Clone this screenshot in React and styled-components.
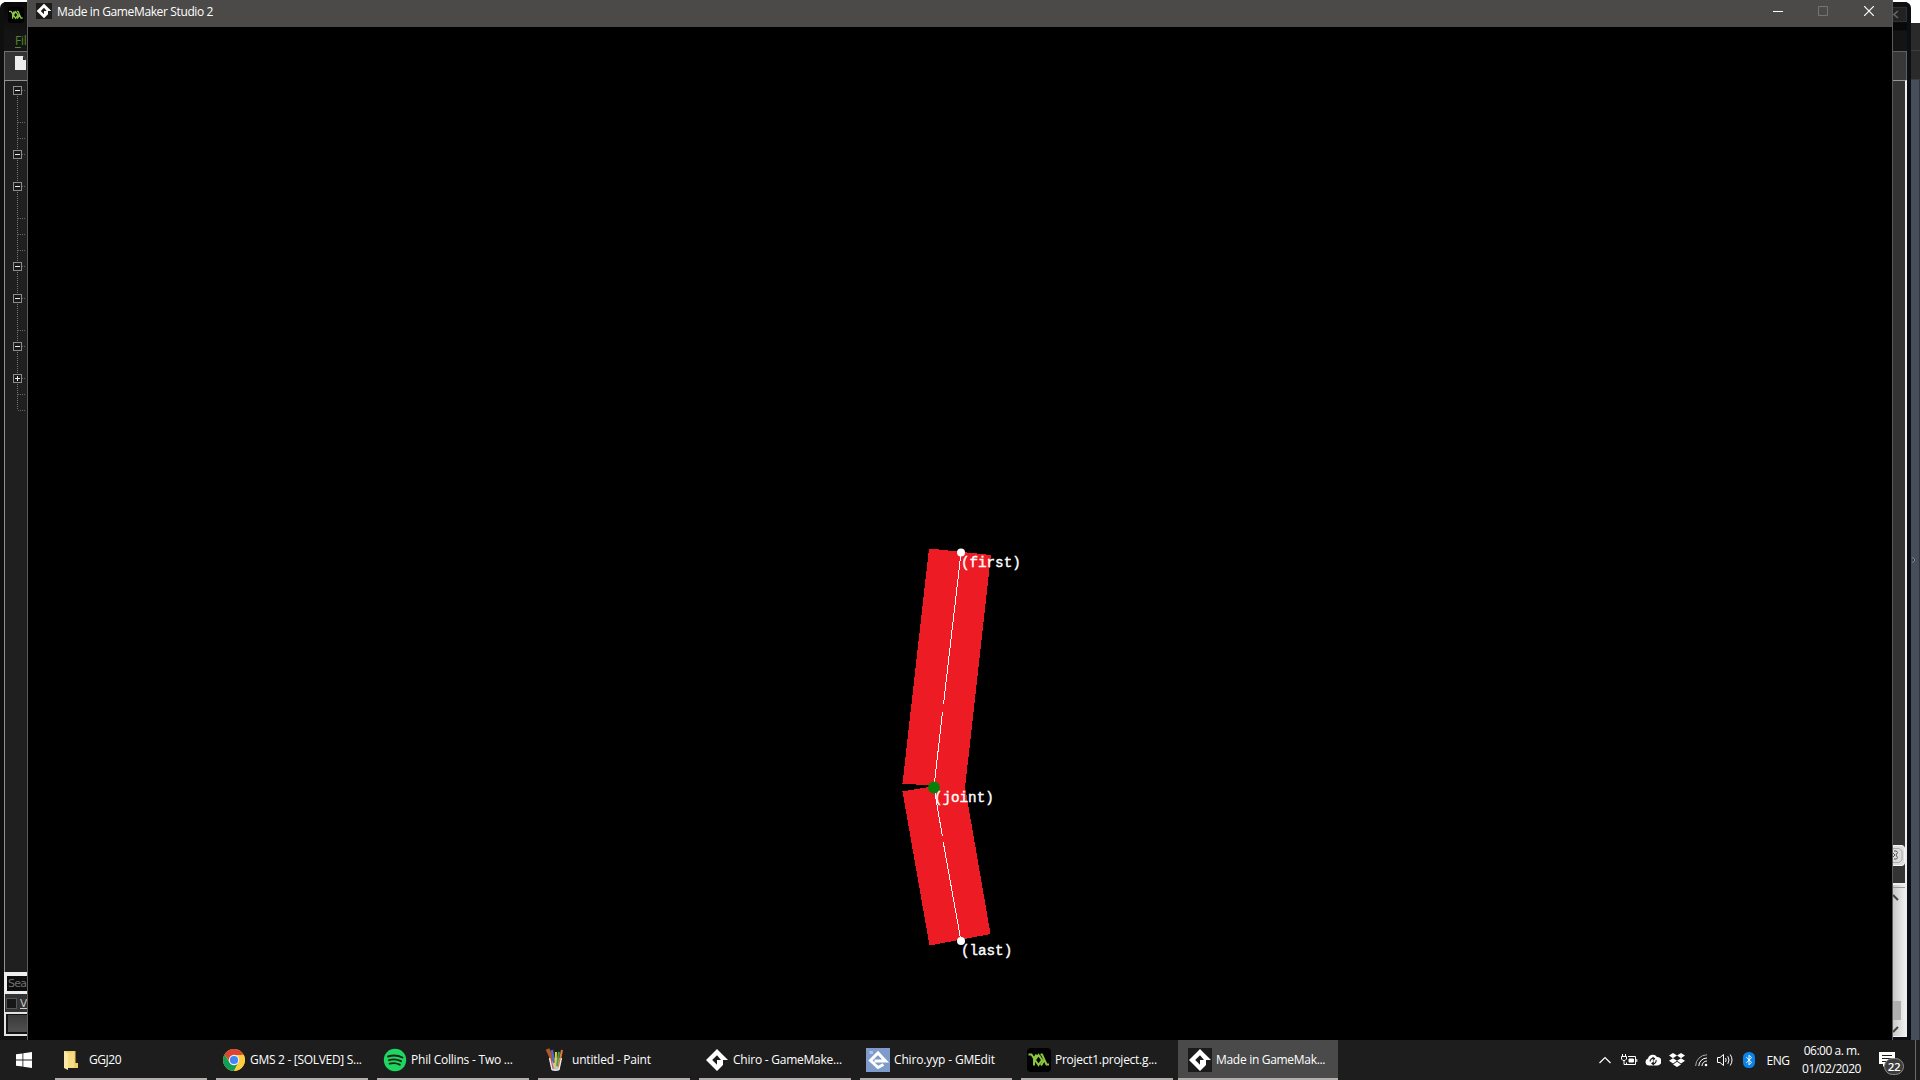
import React from "react";
import styled, { createGlobalStyle } from "styled-components";

const GlobalStyle = createGlobalStyle`
  * { box-sizing: border-box; }
  body {
    margin: 0;
    background: #000;
    overflow: hidden;
    font-family: "Open Sans", "Noto Sans", sans-serif;
    font-size: 12px;
    color: #fff;
  }
  svg { display: block; flex: none; }
`;

const Screen = styled.div`
  width: 1920px;
  height: 1080px;
  display: flex;
  flex-direction: column;
  overflow: hidden;
`;

const Desktop = styled.div`
  flex: 1;
  min-height: 0;
  display: flex;
  background: #fff;
`;

/* ---------- editor window, left edge ---------- */
const EditorLeft = styled.div`
  width: 27px;
  height: 1038px;
  margin-top: 2px;
  padding-left: 4px;
  display: flex;
  flex-direction: column;
  background: #0f0f0f;
  border-top-left-radius: 6px;
  overflow: hidden;
`;
const EditorTitle = styled.div`
  height: 29px;
  padding: 5px 0 0 4px;
  background: linear-gradient(#080808, #131313);
`;
const EditorMenu = styled.div`
  height: 20px;
  padding-left: 11px;
  line-height: 19px;
  font-size: 12px;
  letter-spacing: -0.3px;
  color: #55862c;
  background: #141414;
  white-space: nowrap;
  u { text-underline-offset: 2px; }
`;
const EditorTools = styled.div`
  height: 29px;
  padding: 4px 0 0 10px;
  background: #343434;
  border: solid #717171;
  border-width: 1px 0 0 1px;
`;
const TreePanel = styled.div`
  flex: 1;
  padding: 5px 0 0 8px;
  background: #1f1f1f;
  border: solid #929292;
  border-width: 1px 0 0 1px;
`;
const SearchRow = styled.div`
  height: 22px;
  padding: 4px 0 3px 3px;
  background: #eee;
`;
const SearchField = styled.div`
  height: 15px;
  padding-left: 1px;
  background: #0c0c0c;
  color: #707070;
  font: 11px/16px "DejaVu Sans", sans-serif;
  letter-spacing: -0.8px;
`;
const CheckRow = styled.div`
  height: 18px;
  display: flex;
  align-items: center;
  gap: 3px;
  padding-left: 1px;
  background: #323232;
  border-left: 1px solid #ddd;
  font: 10.5px/14px "DejaVu Sans", sans-serif;
  color: #ccc;
`;
const CheckBox = styled.i`
  flex: none;
  width: 11px;
  height: 11px;
  background: #171717;
  border: 1px solid #555;
`;
const ButtonRow = styled.div`
  height: 24px;
  padding: 1px 0 1px 2px;
  border: solid #e2e2e2;
  border-width: 2px 0 2px 2px;
  background: #111;
  margin-bottom: 4px;
`;
const ButtonFace = styled.div`
  height: 17px;
  background: linear-gradient(#3a3a3a, #505050);
`;

/* ---------- editor window, right edge ---------- */
const RightEdge = styled.div`
  width: 27px;
  display: flex;
`;
const EditorRight = styled.div`
  width: 18px;
  margin-top: 2px;
  padding-right: 4px;
  display: flex;
  flex-direction: column;
  background: #0b0e14;
  border-top-right-radius: 6px;
  overflow: hidden;
`;
const RightTitle = styled.div`
  height: 49px;
  padding-top: 5px;
  background: linear-gradient(#101010 0, #101010 20px, #080808 21px, #080808 28px, #141414 29px);
`;
const CloseStub = styled.div`
  width: 14px;
  height: 15px;
  background: #222;
  border: 1px solid #303030;
  border-left: 0;
`;
const RightTools = styled.div`
  height: 29px;
  background: #383838;
  border: solid #606060;
  border-width: 1px 1px 0 0;
`;
const RightPanel = styled.div`
  height: 957px;
  display: flex;
  flex-direction: column;
  background: #333;
  border: solid #eee;
  border-width: 1px 2px 1px 0;
  border-top-color: #999;
`;
const PanelFill = styled.div`
  height: ${(p) => p.$h}px;
`;
const TabStub = styled.div`
  height: 21px;
  width: 12px;
  background: #ddd;
  border: 1px solid #f4f4f4;
  border-left: 0;
  border-radius: 0 4px 4px 0;
`;
const ScrollBar = styled.div`
  flex: 1;
  display: flex;
  flex-direction: column;
  background: linear-gradient(90deg, #c8c8c8, #eee);
  border-top: 2px solid #eee;
`;
const ScrollThumb = styled.div`
  width: 8px;
  height: 19px;
  margin-top: auto;
  margin-bottom: 6px;
  background: #b0b0b0;
`;
const Behind = styled.div`
  width: 9px;
  display: flex;
  flex-direction: column;
  padding-top: 23px;
`;
const BehindBar = styled.div`
  height: ${(p) => p.$h}px;
  background: #2a2a2a;
  border-bottom: 1px solid #3c3c3c;
`;
const BehindBody = styled.div`
  flex: 1;
  display: flex;
  align-items: center;
  background: linear-gradient(90deg, #464d5b 0 8px, #303540 8px);
`;

/* ---------- game window ---------- */
const GameWindow = styled.div`
  flex: 1;
  display: flex;
  flex-direction: column;
  background: #000;
  border: solid #5b5b5b;
  border-width: 0 1px;
`;
const GameTitle = styled.div`
  height: 27px;
  display: flex;
  align-items: center;
  padding: 0 0 5px 8px;
  background: #4b4a48;
`;
const TitleText = styled.span`
  flex: 1;
  padding: 2px 0 0 5px;
  line-height: 20px;
  letter-spacing: ${(p) => p.$ls}px;
`;
const WindowButton = styled.div`
  width: 46px;
  display: flex;
  justify-content: center;
`;
const GameCanvas = styled.div`
  position: relative;
  flex: 1;
`;
const Label = styled.span`
  position: absolute;
  left: ${(p) => p.$x}px;
  top: ${(p) => p.$y}px;
  font: 14.3px/16px "Liberation Mono", monospace;
  -webkit-text-stroke: 0.4px #fff;
  letter-spacing: -0.05px;
  white-space: pre;
`;

/* ---------- taskbar ---------- */
const Taskbar = styled.div`
  height: 40px;
  display: flex;
  background: #1d1d1d;
`;
const Start = styled.div`
  width: 51px;
  padding: 12px 0 0 16px;
`;
const Tasks = styled.div`
  display: flex;
  gap: 1px;
`;
const Task = styled.div`
  width: 160px;
  display: flex;
  flex-direction: column;
  padding: 0 ${(p) => (p.$active ? 0 : 4)}px;
  background: ${(p) => (p.$active ? "#4a4a4a" : "transparent")};
`;
const TaskBody = styled.div`
  flex: 1;
  display: flex;
  align-items: center;
  gap: 4px;
  padding-left: ${(p) => (p.$active ? 10 : 6)}px;
  padding-top: 2px;
  white-space: nowrap;
`;
const TaskText = styled.span`
  padding-bottom: 2px;
  letter-spacing: ${(p) => p.$ls}px;
`;
const TaskLine = styled.i`
  height: 2px;
  background: #b3aeae;
`;
const Tray = styled.div`
  margin-left: auto;
  display: flex;
  align-items: center;
`;
const TrayItem = styled.div`
  width: ${(p) => p.$w}px;
  display: flex;
  justify-content: center;
  letter-spacing: -0.4px;
`;
const Clock = styled.div`
  width: 80px;
  padding-right: 7px;
  text-align: center;
  line-height: 18px;
  letter-spacing: ${(p) => p.$ls}px;
  white-space: nowrap;
`;
const Notices = styled.div`
  position: relative;
  width: 40px;
  height: 40px;
  padding: 12px 0 0 4px;
`;
const Badge = styled.span`
  position: absolute;
  left: 9px;
  top: 18px;
  width: 20px;
  height: 17px;
  border: 1px solid #8c8c8c;
  border-radius: 9px;
  background: #3c3c3c;
  text-align: center;
  font-size: 11.5px;
  font-weight: 600;
  line-height: 15px;
  letter-spacing: -0.3px;
`;
const ShowDesktop = styled.div`
  width: 5px;
  height: 40px;
  border-left: 1px solid #6a6a6a;
`;

/* ---------- icons ---------- */
const GameMaker = ({ size = 24, tile, fill = "#fff" }) => (
  <svg width={size} height={size} viewBox="0 0 24 24">
    {tile && <rect width="24" height="24" fill="#1b1b1b" />}
    <path
      fill={fill}
      fillRule="evenodd"
      d="M12 1 19 8V8L23 12H18V17L12 23 1 12ZM12 7.2 7.2 12 12 16.8V12H16Z"
    />
  </svg>
);
const YoYo = ({ size = 24 }) => (
  <svg width={size} height={size} viewBox="0 0 24 24">
    <rect width="24" height="24" rx="4" fill="#000" />
    <path
      d="M1.5 6.5H4.5L7 10.5V17.5M9.5 6.5 7 10.5M8 12 11.5 7 15 12 11.5 17ZM13.5 6.5H15L19.5 16.5H22M17 12.5 14 17.5"
      fill="none"
      stroke="#8cc63f"
      strokeWidth="2"
    />
  </svg>
);
const GMEdit = () => (
  <svg width="24" height="24" viewBox="0 0 24 24">
    <rect width="24" height="24" fill="#7e9bcb" />
    <path d="M3.5 3h3.5v3H3.5z" fill="#a9c3ec" />
    <path d="M8.5 13H19.5L12 5 4.5 12.5 12 19.5 17.5 16.5" fill="none" stroke="#fff" strokeWidth="3" />
  </svg>
);
const Folder = () => (
  <svg width="24" height="24" viewBox="0 0 24 24">
    <path d="M3 3H14.5V15H17V20H3Z" fill="#f1cf68" />
    <path d="M3 3 7 5V22L3 20Z" fill="#fbe9a6" />
    <path d="M7 5 13 4V20H7Z" fill="#f8dc83" />
  </svg>
);
const Chrome = () => (
  <svg width="24" height="24" viewBox="0 0 24 24">
    <circle cx="12" cy="12" r="11" fill="#fbc116" />
    <path d="M2.5 6.5A11 11 0 0 1 21.5 6.5L12 8 8 14Z" fill="#db4437" />
    <path d="M2.5 6.5A11 11 0 0 0 12 23L16.5 14.5 7.5 14.5Z" fill="#0f9d58" />
    <path d="M12 7H21.8A11 11 0 0 1 12 23L16.6 14Z" fill="#ffcd40" />
    <circle cx="12" cy="12" r="5.2" fill="#f1f1f1" />
    <circle cx="12" cy="12" r="4.1" fill="#4285f4" />
  </svg>
);
const Spotify = () => (
  <svg width="24" height="24" viewBox="0 0 24 24">
    <circle cx="12" cy="12" r="11.2" fill="#1ed760" />
    <path
      d="M5 8.5Q12.5 6 19.5 9.5M6 12.2Q12.3 10.2 18 13.2M6.6 15.7Q12 14.2 16.8 16.7"
      fill="none"
      stroke="#17261b"
      strokeWidth="1.9"
      strokeLinecap="round"
    />
  </svg>
);
const Paint = () => (
  <svg width="24" height="24" viewBox="0 0 24 24">
    <path d="M5 10H17.5L15 22.5H8Z" fill="#b9c4cb" />
    <path d="M3.5 1 9 13" stroke="#b5552c" strokeWidth="4" />
    <path d="M8 2 10 15" stroke="#4a6bc4" strokeWidth="2.4" />
    <path d="M12 4 11.5 19" stroke="#e6cf36" strokeWidth="2" />
    <path d="M15 4 13 18" stroke="#3fa24c" strokeWidth="2" />
    <path d="M18 2 14.5 19" stroke="#e37a3a" strokeWidth="2" />
    <path d="M7 13 9 21" stroke="#d84b3b" strokeWidth="1.6" />
    <path d="M5.5 10 8 21.5Q11.5 23 15 21.5L17.5 10" stroke="#e8eef0" fill="none" strokeWidth="1.3" />
  </svg>
);
const Windows = () => (
  <svg width="16" height="16" viewBox="0 0 16 16" fill="#fff">
    <path d="M0 2.3 6.5 1.4V7.6H0ZM7.3 1.3 16 0V7.6H7.3ZM0 8.4H6.5V14.6L0 13.7ZM7.3 8.4H16V16L7.3 14.7Z" />
  </svg>
);

/* y of every node below the first one; the sign is drawn where a box exists */
const NODES = [
  [90, "-"], [122], [138], [154, "-"], [186, "-"], [218], [234], [250],
  [266, "-"], [298, "-"], [330], [346, "-"], [378, "+"], [394], [410],
];
const Tree = () => (
  <svg width="14" height="330" viewBox="0 0 14 330" shapeRendering="crispEdges">
    <path d="M4.5 4V324" stroke="#777" strokeDasharray="1 1" />
    {NODES.map(([y, sign]) => {
      const c = y - 86 + 0.5;
      return (
        <g key={y} fill="none">
          <path d={`M5 ${c}H12`} stroke="#666" strokeDasharray="1 1" />
          {sign && <rect x="0.5" y={c - 4} width="8" height="8" fill="#1a1a1a" stroke="#8d8d8d" />}
          {sign && <path d={`M2 ${c}H7`} stroke="#eee" />}
          {sign === "+" && <path d={`M4.5 ${c - 2.5}V${c + 2.5}`} stroke="#eee" />}
        </g>
      );
    })}
  </svg>
);

const TASKS = [
  { icon: <Folder />, text: "GGJ20", ls: -0.45 },
  { icon: <Chrome />, text: "GMS 2 - [SOLVED] S...", ls: -0.3 },
  { icon: <Spotify />, text: "Phil Collins - Two ...", ls: -0.22 },
  { icon: <Paint />, text: "untitled - Paint", ls: -0.2 },
  { icon: <GameMaker />, text: "Chiro - GameMake...", ls: -0.24 },
  { icon: <GMEdit />, text: "Chiro.yyp - GMEdit", ls: -0.15 },
  { icon: <YoYo />, text: "Project1.project.g...", ls: -0.27 },
  { icon: <GameMaker tile />, text: "Made in GameMak...", ls: -0.3, active: true },
];

const Bones = () => (
  <svg width="1864" height="1013" viewBox="28 27 1864 1013">
    <g fill="#ed1c24" shapeRendering="crispEdges">
      <path d="M929 548.5 991 555 965 788 902.5 783.5Z" />
      <path d="M902.5 791.5 964 781 990.5 934 929.5 945.5Z" />
    </g>
    <path
      d="M961 553 943.5 704M942.5 712 934 787 942.3 836M943.2 842 961 941"
      fill="none"
      stroke="#fff"
      shapeRendering="crispEdges"
    />
    <circle cx="961" cy="552.5" r="4" fill="#fff" />
    <circle cx="961" cy="941" r="4" fill="#fff" />
    <circle cx="934" cy="787.5" r="6" fill="#088008" />
  </svg>
);

export default function App() {
  return (
    <Screen>
      <GlobalStyle />
      <Desktop>
        <EditorLeft>
          <EditorTitle><YoYo size={16} /></EditorTitle>
          <EditorMenu><u>F</u>il</EditorMenu>
          <EditorTools>
            <svg width="12" height="15" viewBox="0 0 12 15">
              <path d="M0 0H8L11 4V14H0Z" fill="#eee" />
              <path d="M8 0V4H11Z" fill="#222" />
            </svg>
          </EditorTools>
          <TreePanel><Tree /></TreePanel>
          <SearchRow><SearchField>Sea</SearchField></SearchRow>
          <CheckRow><CheckBox /><u>V</u></CheckRow>
          <ButtonRow><ButtonFace /></ButtonRow>
        </EditorLeft>

        <GameWindow>
          <GameTitle>
            <GameMaker size={16} tile />
            <TitleText $ls={-0.37}>Made in GameMaker Studio 2</TitleText>
            <WindowButton>
              <svg width="11" height="10"><path d="M1 5.5H11" stroke="#fff" /></svg>
            </WindowButton>
            <WindowButton>
              <svg width="10" height="10"><path d="M.5 .5H9.5V9.5H.5Z" stroke="#757472" fill="none" /></svg>
            </WindowButton>
            <WindowButton>
              <svg width="10" height="10"><path d="M0 0 10 10M10 0 0 10" stroke="#fff" strokeWidth="1.2" /></svg>
            </WindowButton>
          </GameTitle>
          <GameCanvas>
            <Bones />
            <Label $x={933} $y={528}>(first)</Label>
            <Label $x={906} $y={763}>(joint)</Label>
            <Label $x={933} $y={916}>(last)</Label>
          </GameCanvas>
        </GameWindow>

        <RightEdge>
          <EditorRight>
            <RightTitle>
              <CloseStub>
                <svg width="8" height="13" viewBox="0 0 8 13">
                  <path d="M5 3 1 6.5 5 10" fill="none" stroke="#666" strokeWidth="1.6" />
                </svg>
              </CloseStub>
            </RightTitle>
            <RightTools />
            <RightPanel>
              <PanelFill $h={764} />
              <TabStub>
                <svg width="10" height="19" viewBox="0 0 10 19">
                  <path d="M1 5H3.5L4.5 6.5 3 9 4.5 11.5 3.5 13H1M0 7 2 9 0 11" fill="none" stroke="#555" />
                  <path d="M0 2.5H6L9 5V14L6 16.5H0" fill="none" stroke="#aaa" />
                </svg>
              </TabStub>
              <PanelFill $h={17} />
              <ScrollBar>
                <svg width="12" height="18" viewBox="0 0 12 18">
                  <path d="M0 2.5H12" stroke="#999" />
                  <path d="M0 10 5 15" stroke="#444" strokeWidth="2" />
                </svg>
                <ScrollThumb />
                <svg width="12" height="10" viewBox="0 0 12 10">
                  <path d="M0 6 5 1" stroke="#444" strokeWidth="2" />
                </svg>
              </ScrollBar>
            </RightPanel>
          </EditorRight>
          <Behind>
            <BehindBar $h={28} />
            <BehindBar $h={29} />
            <BehindBody>
              <svg width="9" height="10" viewBox="0 0 9 10">
                <path d="M2 1.5V8.5L4.5 5Z" fill="#2b303a" />
                <path d="M1.5 2 4 5 1.5 8" fill="none" stroke="#9299a6" />
              </svg>
            </BehindBody>
          </Behind>
        </RightEdge>
      </Desktop>

      <Taskbar>
        <Start><Windows /></Start>
        <Tasks>
          {TASKS.map((t) => (
            <Task key={t.text} $active={t.active}>
              <TaskBody $active={t.active}>
                {t.icon}
                <TaskText $ls={t.ls}>{t.text}</TaskText>
              </TaskBody>
              <TaskLine />
            </Task>
          ))}
        </Tasks>
        <Tray>
          <TrayItem $w={25}>
            <svg width="12" height="8"><path d="M.5 7 6 1.5 11.5 7" fill="none" stroke="#fff" strokeWidth="1.2" /></svg>
          </TrayItem>
          <TrayItem $w={24}>
            <svg width="17" height="12" viewBox="0 0 17 12" fill="none" stroke="#fff">
              <path d="M7 2.5H14.5V10.5H5.5V8.5M15.8 5V8" />
              <path d="M8 5H12.5V8H8Z" fill="#fff" />
              <path d="M1.5 0V2.5M4.5 0V2.5M.5 2.5H5.5V5L4 6.5H2L.5 5ZM3 6.5V10.5H6" />
            </svg>
          </TrayItem>
          <TrayItem $w={24}>
            <svg width="16" height="12" viewBox="0 0 16 12">
              <path d="M4 11.5A3.6 3.6 0 0 1 3 4.5 5 5 0 0 1 12 3 4.2 4.2 0 0 1 12.5 11.5Z" fill="#fff" />
              <path d="M5.2 7.5A2.8 2.8 0 0 1 9 4.5M7.5 3.2 9.5 4.6 8 6.5M11 6A2.8 2.8 0 0 1 7.5 9.5M9 7.8 7 9.4 9 11" fill="none" stroke="#1d1d1d" strokeWidth="1.2" />
            </svg>
          </TrayItem>
          <TrayItem $w={24}>
            <svg width="16" height="14" viewBox="0 0 16 14" fill="#fff">
              <path d="M4 0 8 2.6 4 5.2 0 2.6ZM12 0 16 2.6 12 5.2 8 2.6ZM4 5.2 8 7.8 4 10.4 0 7.8ZM12 5.2 16 7.8 12 10.4 8 7.8ZM8 8.8 12 11.4 8 14 4 11.4Z" />
            </svg>
          </TrayItem>
          <TrayItem $w={25}>
            <svg width="13" height="13" viewBox="0 0 13 13" fill="none" stroke="#fff">
              <path d="M.6 12A11.4 11.4 0 0 1 12 .8" stroke="#aaa" />
              <path d="M3.8 12A8.2 8.2 0 0 1 12 4M7 12A5 5 0 0 1 12 7" />
              <circle cx="11" cy="11" r="1.3" fill="#fff" stroke="none" />
            </svg>
          </TrayItem>
          <TrayItem $w={23}>
            <svg width="17" height="14" viewBox="0 0 17 14" fill="none" stroke="#fff">
              <path d="M.5 4.5H3L6.5 1.5V12.5L3 9.5H.5Z" />
              <path d="M8.5 5Q9.8 7 8.5 9M10.8 3.2Q13.2 7 10.8 10.8M13.2 1.5Q16.8 7 13.2 12.5" />
            </svg>
          </TrayItem>
          <TrayItem $w={24}>
            <svg width="12" height="16" viewBox="0 0 12 16">
              <rect width="12" height="16" rx="5.5" fill="#0a84e8" />
              <path d="M3.3 5.2 8.5 10.3 6 12.8V3.2L8.5 5.7 3.3 10.8" fill="none" stroke="#fff" />
            </svg>
          </TrayItem>
          <TrayItem $w={34}>ENG</TrayItem>
          <Clock $ls={-0.48}>
            <div>06:00 a. m.</div>
            <div>01/02/2020</div>
          </Clock>
          <Notices>
            <svg width="16" height="15" viewBox="0 0 16 15">
              <path d="M0 0H16V12H7L4 15V12H0Z" fill="#fff" />
              <path d="M3 3.5H13M3 6.5H13M3 9.5H10" stroke="#1d1d1d" />
            </svg>
            <Badge>22</Badge>
          </Notices>
          <ShowDesktop />
        </Tray>
      </Taskbar>
    </Screen>
  );
}
